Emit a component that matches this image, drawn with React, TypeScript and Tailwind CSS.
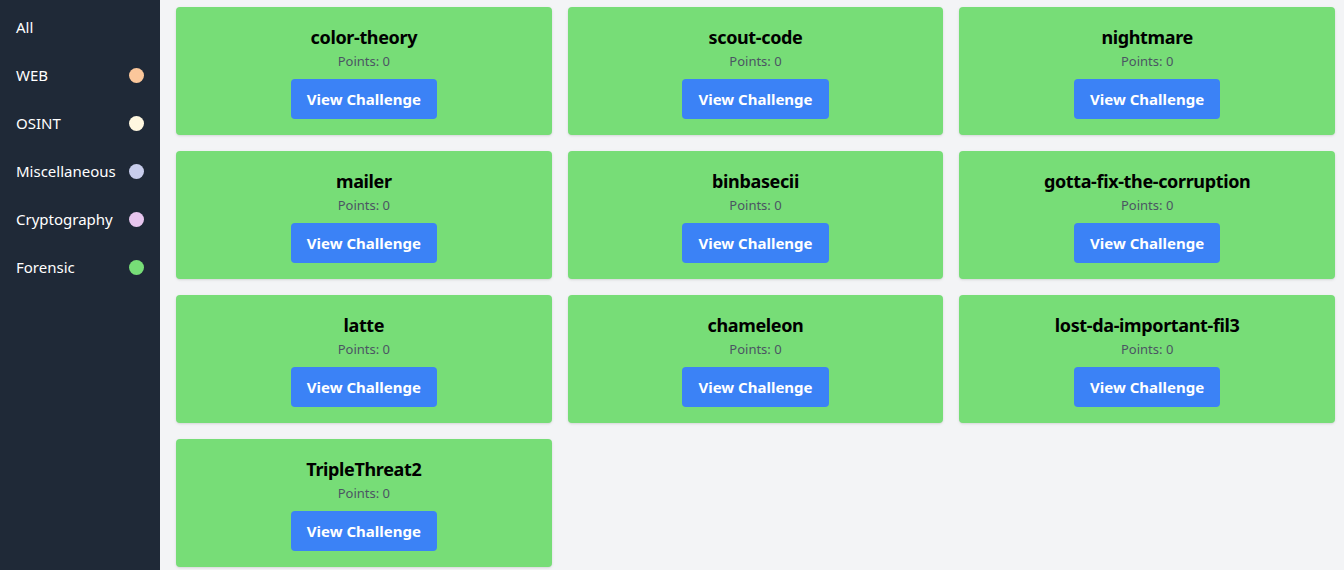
import React from "react";

const cats = [
  { name: "All", color: null },
  { name: "WEB", color: "bg-[#fbc79b]" },
  { name: "OSINT", color: "bg-[#fff7e0]" },
  { name: "Miscellaneous", color: "bg-[#c8cdec]" },
  { name: "Cryptography", color: "bg-[#e7c6ee]" },
  { name: "Forensic", color: "bg-[#77dd77]" },
];

const challenges = [
  "color-theory",
  "scout-code",
  "nightmare",
  "mailer",
  "binbasecii",
  "gotta-fix-the-corruption",
  "latte",
  "chameleon",
  "lost-da-important-fil3",
  "TripleThreat2",
];

export default function App() {
  return (
    <div
      className="flex h-[570px] w-[1344px] overflow-hidden bg-[#f3f4f6]"
      style={{ fontFamily: '"Noto Sans", "Open Sans", sans-serif' }}
    >
      <aside className="w-[160px] shrink-0 bg-[#1f2937] pt-[3px] text-white">
        {cats.map((c) => (
          <div key={c.name} className="flex h-12 items-center justify-between px-4 text-[15px]">
            <span>{c.name}</span>
            {c.color && <span className={`h-[15px] w-[15px] rounded-full ${c.color}`} />}
          </div>
        ))}
      </aside>
      <main className="flex-1 pl-4 pr-[9px] pt-[7px]">
        <div className="grid grid-cols-3 gap-4">
          {challenges.map((t) => (
            <div
              key={t}
              className="flex flex-col items-center rounded bg-[#77dd77] p-4 shadow"
            >
              <h3 className="text-lg font-bold leading-7 tracking-[-0.02em] text-black">{t}</h3>
              <p className="text-[13px] leading-5 text-[#4b5563]">Points: 0</p>
              <button className="mt-2 rounded bg-[#3b82f6] px-4 py-2 text-[15px] font-bold leading-6 text-white">
                View Challenge
              </button>
            </div>
          ))}
        </div>
      </main>
    </div>
  );
}
